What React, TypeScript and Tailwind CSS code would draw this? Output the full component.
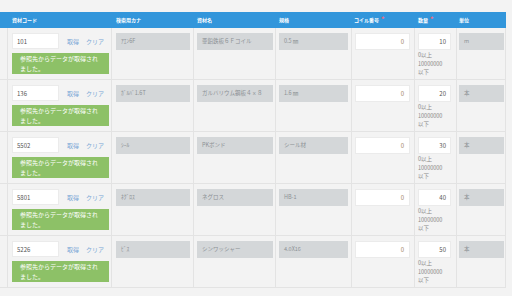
import React from "react";

const rows = [
  { code: "101", kana: "ｱｴﾝ6F", name: "亜鉛鉄板６Ｆコイル", spec: "0.5 ㎜", coil: "0", qty: "10", unit: "m" },
  { code: "136", kana: "ｶﾞﾙﾊﾞ1.6T", name: "ガルバリウム鋼板４ｘ８", spec: "1.6 ㎜", coil: "0", qty: "20", unit: "本" },
  { code: "5502", kana: "ｼｰﾙ", name: "PKボンド", spec: "シール材", coil: "0", qty: "30", unit: "本" },
  { code: "5801", kana: "ﾈｸﾞﾛｽ", name: "ネグロス", spec: "HB-1", coil: "0", qty: "40", unit: "本" },
  { code: "5226", kana: "ﾋﾞｽ", name: "シンワッシャー", spec: "4.0X16", coil: "0", qty: "50", unit: "本" },
];

const cols = "grid grid-cols-[7px_104px_82px_82px_76px_63px_42px_50px]";

function ReadOnly({ value, w }: { value: string; w: string }) {
  return (
    <div className={`${w} flex h-[17px] items-center bg-[#d4d7d9] pl-[5px] text-[5.5px] text-[#8c9195]`}>
      {value}
    </div>
  );
}

export default function App() {
  return (
    <div className="h-[296px] w-[512px] overflow-hidden bg-[#f3f3f3] pt-[12px] font-['Noto_Sans_CJK_JP',sans-serif]">
      <div className="w-[506px]">
        {/* HEADER */}
        <div className={`${cols} h-[16px] items-center bg-[#3296db] text-[5px] font-bold text-white`}>
          <div />
          <div className="pl-[5px]">資材コード</div>
          <div className="pl-[5px]">検索用カナ</div>
          <div className="pl-[4px]">資材名</div>
          <div className="pl-[4px]">規格</div>
          <div className="flex items-start pl-[3px]">
            コイル番号<span className="ml-[2px] -mt-[2px] text-[7px] text-[#f06a7e]">*</span>
          </div>
          <div className="flex items-start pl-[4px]">
            数量<span className="ml-[2px] -mt-[2px] text-[7px] text-[#f06a7e]">*</span>
          </div>
          <div className="pl-[3px]">単位</div>
        </div>

        {/* ROWS */}
        {rows.map((r, i) => (
          <div key={i} className={`${cols} h-[52px] border-b border-[#e3e3e3]`}>
            <div />
            <div className="border-l border-[#e3e3e3] pl-[4px] pt-[5px]">
              <div className="flex items-center">
                <div className="flex h-[16px] w-[47px] items-center border border-[#ebebeb] bg-white pl-[4px] text-[6px] text-[#555]">
                  {r.code}
                </div>
                <span className="ml-[8px] text-[6px] text-[#7aa7d6]">取得</span>
                <span className="ml-[7px] text-[6px] text-[#7aa7d6]">クリア</span>
              </div>
              <div className="mt-[4px] h-[21px] w-[97px] bg-[#8dc167] pl-[8px] pt-[1px] text-[6px] leading-[10px] text-white">
                参照先からデータが取得され
                <br />
                ました。
              </div>
            </div>
            <div className="border-l border-[#e3e3e3] pl-[4px] pt-[5px]">
              <ReadOnly value={r.kana} w="w-[74px]" />
            </div>
            <div className="border-l border-[#e3e3e3] pl-[3px] pt-[5px]">
              <ReadOnly value={r.name} w="w-[76px]" />
            </div>
            <div className="border-l border-[#e3e3e3] pl-[3px] pt-[5px]">
              <ReadOnly value={r.spec} w="w-[69px]" />
            </div>
            <div className="border-l border-[#e3e3e3] pl-[3px] pt-[5px]">
              <div className="flex h-[17px] w-[55px] items-center justify-end border border-[#ebebeb] bg-white pr-[5px] text-[6px] text-[#a08468]">
                {r.coil}
              </div>
            </div>
            <div className="border-l border-[#e3e3e3] pl-[3px] pt-[5px]">
              <div className="flex h-[17px] w-[33px] items-center justify-end border border-[#ebebeb] bg-white pr-[4px] text-[6px] text-[#555]">
                {r.qty}
              </div>
              <div className="mt-[1px] text-[5.5px] leading-[8.5px] text-[#8a8a8a]">
                0以上
                <br />
                10000000
                <br />
                以下
              </div>
            </div>
            <div className="border-l border-r border-[#e3e3e3] pl-[2px] pt-[5px]">
              <ReadOnly value={r.unit} w="w-[45px]" />
            </div>
          </div>
        ))}
      </div>
    </div>
  );
}
